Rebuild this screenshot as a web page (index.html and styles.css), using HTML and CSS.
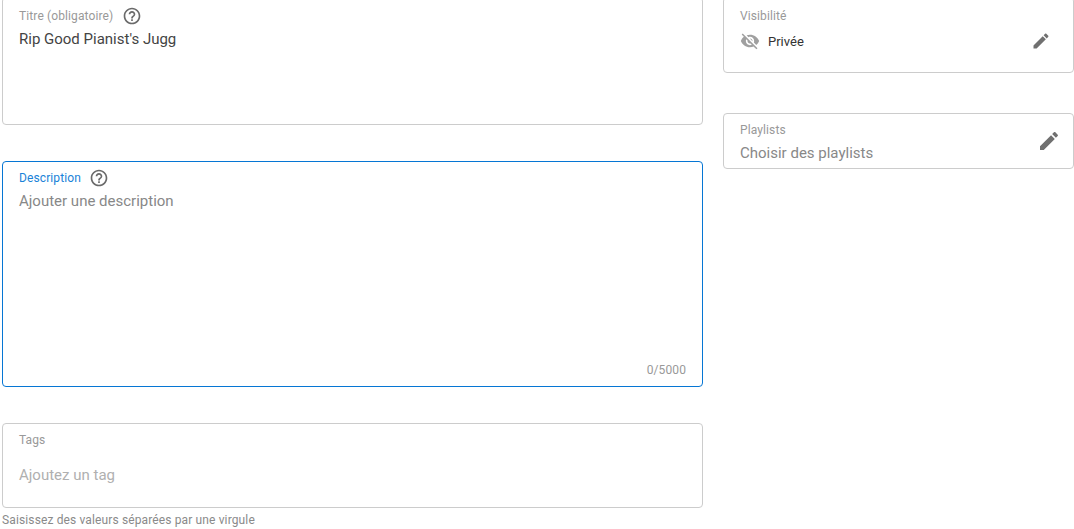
FILE: index.html
```html
<!DOCTYPE html>
<html lang="fr">
<head>
<meta charset="utf-8">
<title>Détails</title>
<link rel="stylesheet" href="styles.css">
</head>
<body>
<main class="page">
  <section class="col-left">
    <div class="field field-title">
      <div class="label-row"><span class="label">Titre (obligatoire)</span>
        <svg class="help" viewBox="0 0 24 24"><path d="M11 18h2v-2h-2v2zm1-16C6.48 2 2 6.48 2 12s4.48 10 10 10 10-4.48 10-10S17.52 2 12 2zm0 18c-4.41 0-8-3.59-8-8s3.59-8 8-8 8 3.59 8 8-3.59 8-8 8zm0-14c-2.21 0-4 1.79-4 4h2c0-1.1.9-2 2-2s2 .9 2 2c0 2-3 1.75-3 5h2c0-2.25 3-2.5 3-5 0-2.21-1.79-4-4-4z"/></svg>
      </div>
      <div class="value">Rip Good Pianist's Jugg</div>
    </div>
    <div class="field field-desc">
      <div class="label-row"><span class="label label-focus">Description</span>
        <svg class="help" viewBox="0 0 24 24"><path d="M11 18h2v-2h-2v2zm1-16C6.48 2 2 6.48 2 12s4.48 10 10 10 10-4.48 10-10S17.52 2 12 2zm0 18c-4.41 0-8-3.59-8-8s3.59-8 8-8 8 3.59 8 8-3.59 8-8 8zm0-14c-2.21 0-4 1.79-4 4h2c0-1.1.9-2 2-2s2 .9 2 2c0 2-3 1.75-3 5h2c0-2.25 3-2.5 3-5 0-2.21-1.79-4-4-4z"/></svg>
      </div>
      <div class="value placeholder">Ajouter une description</div>
      <div class="counter">0/5000</div>
    </div>
    <div class="field field-tags">
      <div class="label">Tags</div>
      <div class="value placeholder-light">Ajoutez un tag</div>
    </div>
    <p class="hint">Saisissez des valeurs séparées par une virgule</p>
  </section>
  <aside class="col-right">
    <div class="field side-vis">
      <div class="side-main">
        <div class="label">Visibilité</div>
        <div class="vis-row">
          <svg class="eye" viewBox="0 0 24 24"><path d="M12 7c2.76 0 5 2.24 5 5 0 .65-.13 1.26-.36 1.83l2.92 2.92c1.51-1.26 2.7-2.89 3.43-4.75-1.73-4.39-6-7.5-11-7.5-1.4 0-2.74.25-3.98.7l2.16 2.16C10.74 7.13 11.35 7 12 7zM2 4.27l2.28 2.28.46.46C3.08 8.3 1.78 10.02 1 12c1.73 4.39 6 7.5 11 7.5 1.55 0 3.03-.3 4.38-.84l.42.42L19.73 22 21 20.73 3.27 3 2 4.27zM7.53 9.8l1.55 1.55c-.05.21-.08.43-.08.65 0 1.66 1.34 3 3 3 .22 0 .44-.03.65-.08l1.55 1.55c-.67.33-1.41.53-2.2.53-2.76 0-5-2.24-5-5 0-.79.2-1.53.53-2.2zm4.31-.78l3.15 3.15.02-.16c0-1.66-1.34-3-3-3l-.17.01z"/></svg>
          <span class="vis-text">Privée</span>
        </div>
      </div>
      <svg class="pencil pencil-small" viewBox="0 0 24 24"><path d="M3 17.25V21h3.75L17.81 9.94l-3.75-3.75L3 17.25zM20.71 7.04c.39-.39.39-1.02 0-1.41l-2.34-2.34c-.39-.39-1.02-.39-1.41 0l-1.83 1.83 3.75 3.75 1.83-1.83z"/></svg>
    </div>
    <div class="field side-play">
      <div class="side-main">
        <div class="label">Playlists</div>
        <div class="value placeholder play-value">Choisir des playlists</div>
      </div>
      <svg class="pencil" viewBox="0 0 24 24"><path d="M3 17.25V21h3.75L17.81 9.94l-3.75-3.75L3 17.25zM20.71 7.04c.39-.39.39-1.02 0-1.41l-2.34-2.34c-.39-.39-1.02-.39-1.41 0l-1.83 1.83 3.75 3.75 1.83-1.83z"/></svg>
    </div>
  </aside>
</main>
</body>
</html>
```
FILE: styles.css
```css
* { box-sizing: border-box; }
html, body { margin: 0; height: 100%; overflow: hidden; background: #fff; }
body { font-family: Roboto, "Liberation Sans", sans-serif; }
.page { display: flex; gap: 20px; padding-left: 2px; margin-top: -3px; }
.col-left { width: 701px; flex: none; display: flex; flex-direction: column; }
.col-right { width: 351px; flex: none; display: flex; flex-direction: column; gap: 40px; }
.field { border: 1px solid #cccccc; border-radius: 4px; background: #fff; }
.field-title { height: 128px; padding: 8px 16px 0; margin-bottom: 36px; }
.field-desc { height: 226px; padding: 6px 16px 0; margin-bottom: 36px; border-color: #0676d4; position: relative; }
.field-tags { height: 85px; padding: 8px 16px 0; }
.label-row { display: flex; align-items: center; gap: 9px; height: 20px; }
.field-desc .label-row { gap: 8px; }
.label { font-size: 12px; line-height: 16px; color: #999999; letter-spacing: 0.11px; }
.label-focus { color: #1a82d8; }
.help { width: 20px; height: 20px; fill: #6a6a6a; flex: none; }
.value { font-size: 15px; line-height: 20px; margin-top: 3px; color: #444444; }
.placeholder { color: #888888; }
.placeholder-light { color: #b0b0b0; margin-top: 17px; }
.counter { position: absolute; right: 16px; bottom: 8px; font-size: 12px; line-height: 16px; color: #999999; letter-spacing: 0.1px; }
.hint { margin: 5px 0 0; font-size: 12px; line-height: 14px; color: #8a8a8a; letter-spacing: 0.13px; }
.side-vis, .side-play { display: flex; align-items: center; justify-content: space-between; padding-left: 16px; }
.side-vis { height: 76px; padding-right: 22px; align-items: flex-start; }
.side-play { height: 56px; padding-right: 12px; }
.side-main { display: flex; flex-direction: column; }
.side-vis .side-main { padding-top: 10px; }
.side-play .side-main { padding-top: 2px; }
.vis-row { display: flex; align-items: center; gap: 8px; margin-top: 7px; height: 20px; }
.eye { width: 20px; height: 20px; fill: #a0a0a0; flex: none; }
.vis-text { font-size: 13px; color: #333333; }
.play-value { margin-top: 5px; line-height: 20px; }
.pencil { width: 24px; height: 24px; fill: #707070; flex: none; }
.pencil-small { width: 20px; height: 20px; margin-top: 33px; }
```
